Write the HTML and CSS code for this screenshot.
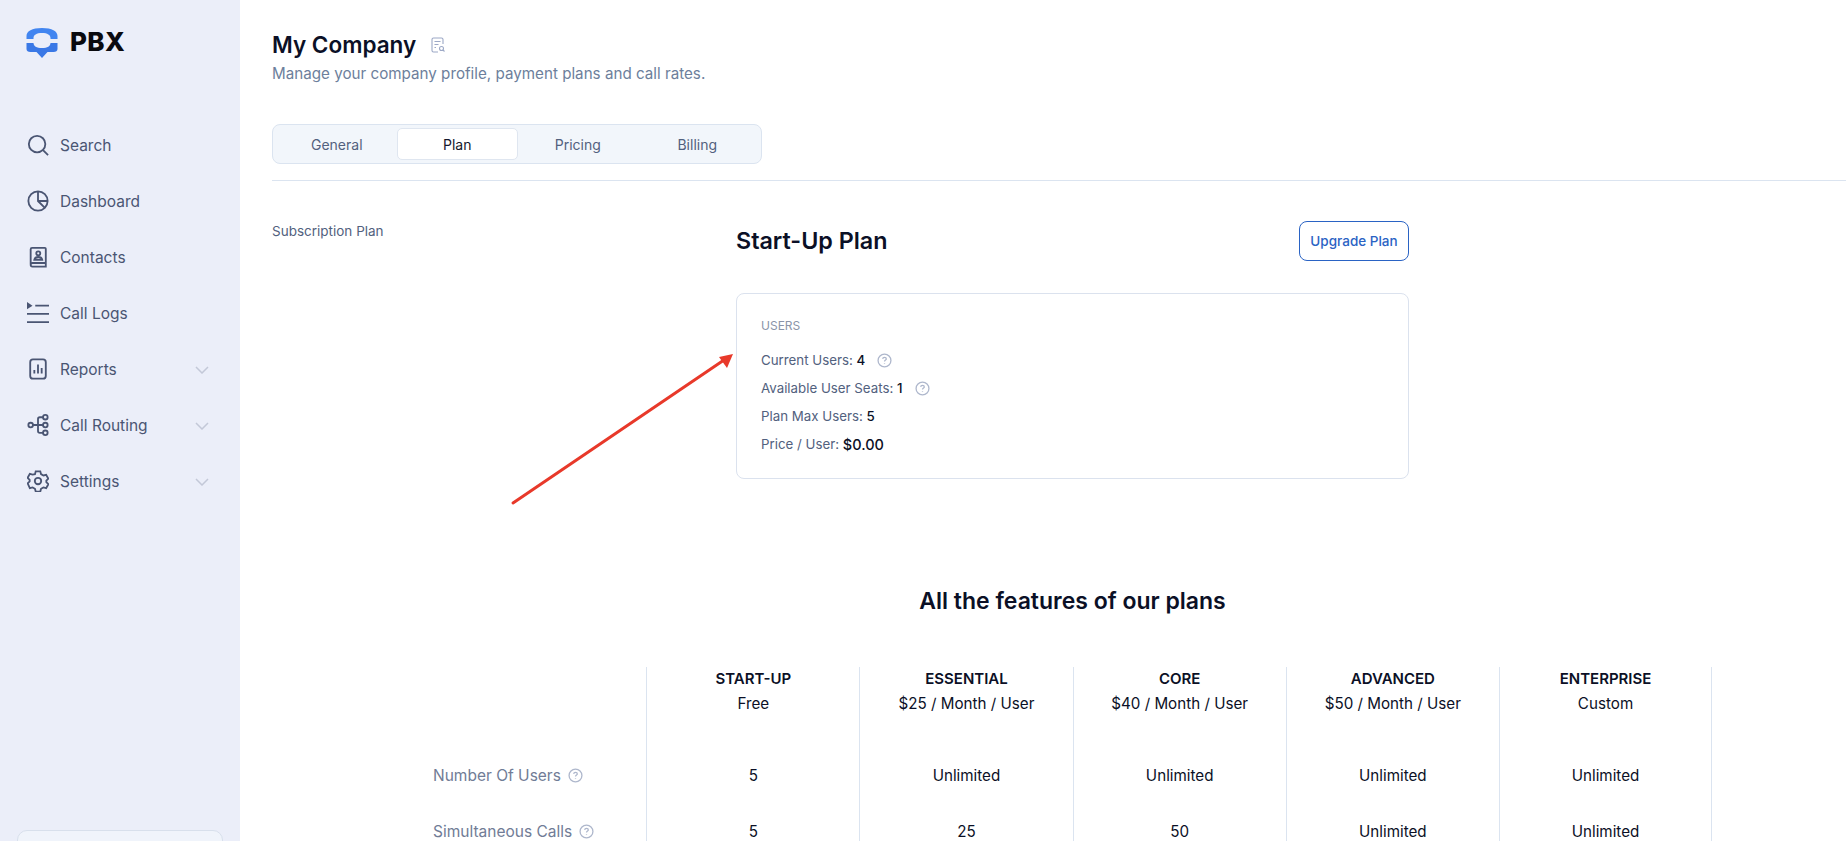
FILE: index.html
```html
<!DOCTYPE html>
<html lang="en">
<head>
  <meta charset="UTF-8">
  <meta name="viewport" content="width=device-width, initial-scale=1.0">
  <title>My Company</title>
  <link rel="stylesheet" href="styles.css">
</head>
<body>
  <aside class="sidebar">
    <div class="logo">
      <svg class="logo-mark" viewBox="0 0 32 32" width="32" height="32">
        <path d="M0.500 9C0.500 4 6 1 16 1s15.500 3 15.500 8v3h-7v-1c0-3-3-5-8.500-5s-8.500 2-8.500 5v1h-7z" fill="#4285f0"/>
        <path d="M0.500 16h7c0 3 3 5 8.500 5s8.500-2 8.500-5h7v6c0 2-1.500 3-4 3h-6l-5.500 6-5.500-6h-6c-2.500 0-4-1-4-3z" fill="#3a78e6"/>
      </svg>
      <span class="logo-text">PBX</span>
    </div>
    <nav class="nav">
      <a class="nav-item" href="#">
        <svg class="nav-icon" viewBox="0 0 24 24"><circle cx="11" cy="11" r="9"/><path d="M17.500 17.500 23 23"/></svg>
        <span>Search</span>
      </a>
      <a class="nav-item" href="#">
        <svg class="nav-icon" viewBox="0 0 24 24"><circle cx="12" cy="12" r="10.500"/><path d="M12 1.500V12l7.500 7.500M12 12h10.500"/></svg>
        <span>Dashboard</span>
      </a>
      <a class="nav-item" href="#">
        <svg class="nav-icon" viewBox="0 0 24 24"><path d="M4 20V3.500C4 2.500 4.500 2 5.500 2h14c.800 0 1 .500 1 1v19.500H6C4.800 22.500 4 21.500 4 20.500s.800-2 2-2h14.500"/><circle cx="12.300" cy="8" r="2.200"/><path d="M8 15c.500-2.200 2-3 4.300-3s3.800.800 4.300 3z"/></svg>
        <span>Contacts</span>
      </a>
      <a class="nav-item" href="#">
        <svg class="nav-icon nav-icon-wide" viewBox="0 0 24 24"><path d="M9 4h15M0 13h24M0 22h24"/><path class="solid" d="M0 0l6 4-6 4z"/></svg>
        <span>Call Logs</span>
      </a>
      <a class="nav-item" href="#">
        <svg class="nav-icon" viewBox="0 0 24 24"><rect x="3.500" y="1.500" width="17" height="21" rx="3"/><path d="M8 17v-4M12 17V7M16 17v-6"/></svg>
        <span>Reports</span>
        <svg class="chevron" viewBox="0 0 14 8"><path d="M1 1l6 6 6-6"/></svg>
      </a>
      <a class="nav-item" href="#">
        <svg class="nav-icon" viewBox="0 0 24 24"><circle cx="4" cy="12" r="2.500"/><circle cx="20" cy="3.500" r="2.500"/><circle cx="20" cy="12" r="2.500"/><circle cx="20" cy="20.500" r="2.500"/><path d="M6.500 12h11M17.500 3.500H14c-1.200 0-2 .800-2 2v13c0 1.200.800 2 2 2h3.500"/></svg>
        <span>Call Routing</span>
        <svg class="chevron" viewBox="0 0 14 8"><path d="M1 1l6 6 6-6"/></svg>
      </a>
      <a class="nav-item" href="#">
        <svg class="nav-icon" viewBox="0 0 24 24"><circle cx="12" cy="12" r="3.500"/><path d="M9.500 1.500h5l.800 3 2.600 1.500 3-.800 2.400 4.300-2.200 2.200v1.600l2.200 2.200-2.400 4.300-3-.800-2.600 1.500-.800 3h-5l-.800-3-2.600-1.500-3 .800L.700 14.500l2.200-2.200v-1.600L.700 8.500l2.400-4.300 3 .800L8.700 4.500z"/></svg>
        <span>Settings</span>
        <svg class="chevron" viewBox="0 0 14 8"><path d="M1 1l6 6 6-6"/></svg>
      </a>
    </nav>
    <div class="sidebar-card"></div>
  </aside>

  <main class="main">
    <header class="page-head">
      <h1>My Company
        <svg class="title-icon" viewBox="0 0 14 16"><path d="M12 7V2.500C12 1.500 11.500 1 10.500 1h-8C1.500 1 1 1.500 1 2.500v11c0 1 .500 1.500 1.500 1.500H7"/><path d="M3.500 4.500h6M3.500 7.500h4M3.500 10.500h1.500"/><circle cx="10.500" cy="11.500" r="2"/><path d="M12 13l1.500 1.500"/></svg>
      </h1>
      <p>Manage your company profile, payment plans and call rates.</p>
    </header>

    <div class="tabs">
      <a class="tab" href="#">General</a>
      <a class="tab active" href="#">Plan</a>
      <a class="tab" href="#">Pricing</a>
      <a class="tab" href="#">Billing</a>
    </div>

    <section class="plan-section">
      <div class="section-label">Subscription Plan</div>
      <div class="plan-body">
        <div class="plan-head">
          <h2>Start-Up Plan</h2>
          <a class="upgrade-button" href="#">Upgrade Plan</a>
        </div>
        <div class="plan-card">
          <div class="card-title">USERS</div>
          <div class="card-row">Current Users: <b>4</b>
            <svg class="help" viewBox="0 0 14 14"><circle cx="7" cy="7" r="6"/><path d="M5.300 5.500C5.400 4.500 6 4 7 4s1.700.600 1.700 1.500S7 6.800 7 8"/><path d="M7 9.700v.600"/></svg>
          </div>
          <div class="card-row">Available User Seats: <b>1</b>
            <svg class="help" viewBox="0 0 14 14"><circle cx="7" cy="7" r="6"/><path d="M5.300 5.500C5.400 4.500 6 4 7 4s1.700.600 1.700 1.500S7 6.800 7 8"/><path d="M7 9.700v.600"/></svg>
          </div>
          <div class="card-row">Plan Max Users: <b>5</b></div>
          <div class="card-row">Price / User: <b class="price">$0.00</b></div>
        </div>
      </div>
    </section>

    <section class="features">
      <h2>All the features of our plans</h2>
      <div class="plans-table">
        <div class="cell-blank"></div>
        <div class="col-head"><strong>START-UP</strong><span>Free</span></div>
        <div class="col-head"><strong>ESSENTIAL</strong><span>$25 / Month / User</span></div>
        <div class="col-head"><strong>CORE</strong><span>$40 / Month / User</span></div>
        <div class="col-head"><strong>ADVANCED</strong><span>$50 / Month / User</span></div>
        <div class="col-head last"><strong>ENTERPRISE</strong><span>Custom</span></div>

        <div class="row-label">Number Of Users
          <svg class="help" viewBox="0 0 14 14"><circle cx="7" cy="7" r="6"/><path d="M5.300 5.500C5.400 4.500 6 4 7 4s1.700.600 1.700 1.500S7 6.800 7 8"/><path d="M7 9.700v.600"/></svg>
        </div>
        <div class="cell">5</div>
        <div class="cell">Unlimited</div>
        <div class="cell">Unlimited</div>
        <div class="cell">Unlimited</div>
        <div class="cell last">Unlimited</div>

        <div class="row-label">Simultaneous Calls
          <svg class="help" viewBox="0 0 14 14"><circle cx="7" cy="7" r="6"/><path d="M5.300 5.500C5.400 4.500 6 4 7 4s1.700.600 1.700 1.500S7 6.800 7 8"/><path d="M7 9.700v.600"/></svg>
        </div>
        <div class="cell">5</div>
        <div class="cell">25</div>
        <div class="cell">50</div>
        <div class="cell">Unlimited</div>
        <div class="cell last">Unlimited</div>
      </div>
    </section>
  </main>

  <svg class="annotation" viewBox="0 0 1846 841" width="1846" height="841">
    <path d="M513 503 724 360" stroke="#e8392a" stroke-width="3" stroke-linecap="round" fill="none"/>
    <path d="M733 354 719 357 727 368z" fill="#e8392a"/>
  </svg>
</body>
</html>
```

FILE: styles.css
```css
* {
  box-sizing: border-box;
}
html, body {
  height: 841px;
}
body {
  font-family: Inter, "Liberation Sans", sans-serif;
  margin: 0;
  padding: 0;
  display: flex;
  overflow: hidden;
  background: white;
  color: #0b1026;
}
a {
  text-decoration: none;
  color: inherit;
}

/* sidebar */
.sidebar {
  width: 240px;
  flex-shrink: 0;
  background-color: #ebeef9;
  padding: 27px 0 0 0;
  position: relative;
  overflow: hidden;
}
.logo {
  display: flex;
  align-items: center;
  gap: 12px;
  padding-left: 26px;
  height: 32px;
}
.logo-text {
  font-size: 26px;
  font-weight: 800;
  color: #0a0a0f;
  letter-spacing: 0.4px;
  position: relative;
  top: -2px;
}
.nav {
  margin-top: 58px;
}
.nav-item {
  display: flex;
  align-items: center;
  height: 56px;
  padding-left: 27px;
  font-size: 15.5px;
  color: #4a5573;
  position: relative;
}
.nav-item span {
  margin-left: 11px;
}
.nav-icon {
  width: 22px;
  height: 22px;
  flex-shrink: 0;
  fill: none;
  stroke: #4a5573;
  stroke-width: 2;
}
.nav-icon-wide {
  width: 24px;
  margin-left: -1px;
  margin-right: -1px;
}
.nav-icon .solid {
  fill: #4a5573;
  stroke: none;
}
.chevron {
  position: absolute;
  left: 195px;
  top: 25px;
  width: 14px;
  height: 8px;
  fill: none;
  stroke: #c3c8d8;
  stroke-width: 1.500;
}
.sidebar-card {
  position: absolute;
  left: 17px;
  top: 830px;
  width: 206px;
  height: 60px;
  background-color: #f0f4fb;
  border: 1px solid #d8e0ec;
  border-radius: 10px;
}

/* page */
.main {
  flex: 1;
  padding: 30px 0 0 32px;
  min-width: 0;
}
.page-head h1 {
  margin: 0;
  font-size: 22.500px;
  line-height: 30px;
  font-weight: 600;
  color: #0b1026;
  display: flex;
  align-items: center;
}
.title-icon {
  width: 14px;
  height: 16px;
  margin-left: 15px;
  fill: none;
  stroke: #9ca8c6;
  stroke-width: 1.100;
}
.page-head p {
  margin: 3px 0 0;
  font-size: 15.200px;
  line-height: 22px;
  color: #6d7f9c;
}
.tabs {
  display: flex;
  width: 490px;
  height: 40px;
  margin-top: 39px;
  padding: 3px 4px;
  background-color: #f2f6fb;
  border: 1px solid #dbe4f0;
  border-radius: 8px;
}
.tab {
  flex: 1;
  display: flex;
  align-items: center;
  justify-content: center;
  height: 32px;
  font-size: 14px;
  color: #52617e;
  border-radius: 5px;
}
.tab.active {
  background-color: white;
  border: 1px solid #dfe6f0;
  color: #14182c;
}

/* current plan */
.plan-section {
  display: flex;
  margin-top: 16px;
  padding-top: 40px;
  border-top: 1px solid #dbe4f0;
}
.section-label {
  width: 464px;
  flex-shrink: 0;
  font-size: 13.500px;
  line-height: 20px;
  color: #52617e;
}
.plan-body {
  width: 673px;
}
.plan-head {
  display: flex;
  align-items: center;
  justify-content: space-between;
}
.plan-head h2 {
  margin: 0;
  font-size: 23.300px;
  line-height: 40px;
  font-weight: 600;
  color: #0b1026;
}
.upgrade-button {
  display: flex;
  align-items: center;
  justify-content: center;
  width: 110px;
  height: 40px;
  font-size: 13.500px;
  font-weight: 500;
  color: #2a63c4;
  border: 1px solid #2a63c4;
  border-radius: 8px;
}
.plan-card {
  margin-top: 32px;
  height: 186px;
  padding: 23px 24px;
  border: 1px solid #dbe2ee;
  border-radius: 8px;
}
.card-title {
  font-size: 12px;
  line-height: 18px;
  color: #8a94a8;
  margin-bottom: 11px;
}
.card-row {
  display: flex;
  align-items: center;
  height: 28px;
  font-size: 13.300px;
  color: #52617e;
  white-space: pre;
}
.card-row b {
  font-weight: 500;
  color: #0b1026;
}
.card-row .price {
  font-size: 14.500px;
}
.help {
  width: 15px;
  height: 15px;
  flex-shrink: 0;
  margin-left: 12px;
  fill: none;
  stroke: #aeb7cc;
  stroke-width: 1.200;
}

/* comparison table */
.features {
  margin: 102px 0 0 161px;
  width: 1279px;
}
.features h2 {
  margin: 0;
  font-size: 23px;
  line-height: 40px;
  font-weight: 600;
  text-align: center;
  color: #0b1026;
}
.plans-table {
  display: grid;
  grid-template-columns: repeat(6, 213.200px);
  grid-template-rows: 80px 56px 56px;
  margin-top: 46px;
}
.col-head, .cell {
  border-left: 1px solid #dbe4f0;
  text-align: center;
  font-size: 15.200px;
  color: #0b1026;
}
.col-head strong, .col-head span {
  display: block;
  line-height: 24px;
}
.col-head strong {
  font-size: 15px;
  font-weight: 600;
}
.col-head span {
  margin-top: 1px;
}
.cell {
  display: flex;
  align-items: center;
  justify-content: center;
}
.last {
  border-right: 1px solid #dbe4f0;
}
.row-label {
  display: flex;
  align-items: center;
  white-space: nowrap;
  font-size: 15.500px;
  color: #717c96;
}
.row-label .help {
  margin-left: 7px;
}

/* red pointer drawn over the page */
.annotation {
  position: absolute;
  left: 0;
  top: 0;
  pointer-events: none;
}
```
